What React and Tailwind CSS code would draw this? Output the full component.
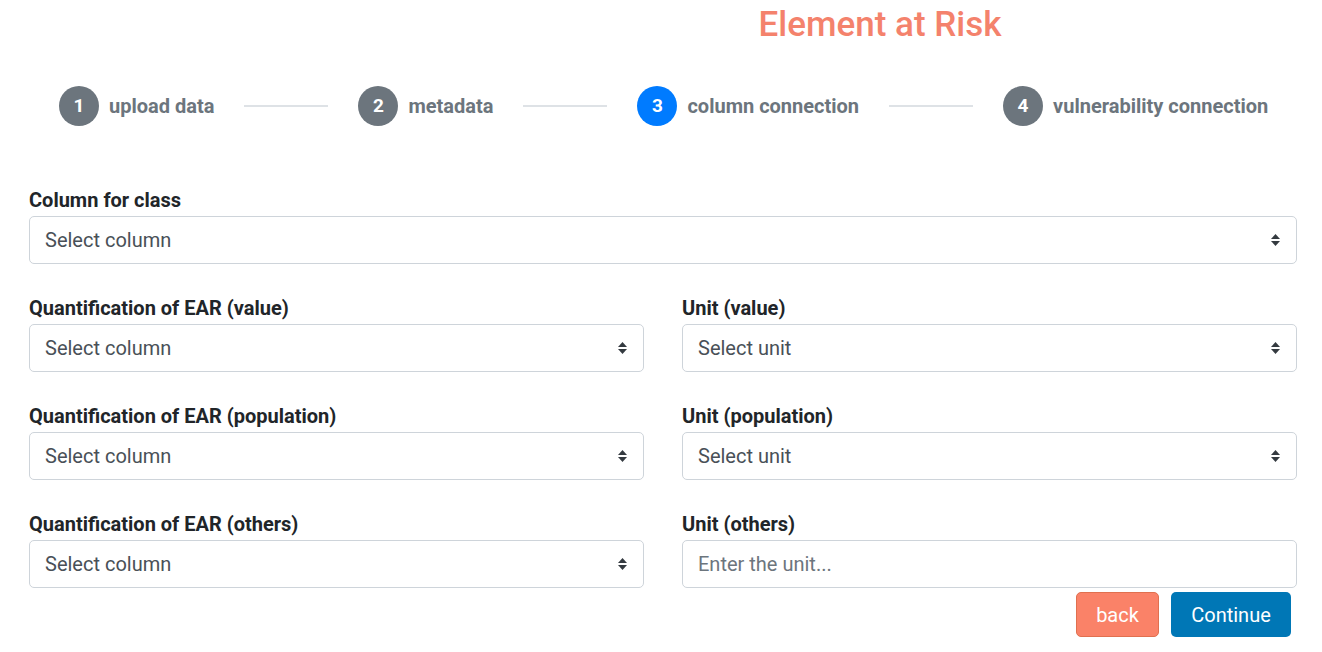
import React from "react"

const steps = [
  { n: 1, label: "upload data" },
  { n: 2, label: "metadata" },
  { n: 3, label: "column connection", active: true },
  { n: 4, label: "vulnerability connection" },
]

const Arrows = () => (
  <svg width="11" height="16" viewBox="0 0 11 16" className="shrink-0">
    <path d="M1 7 L5.5 2 L10 7 Z" fill="#343a40" />
    <path d="M1 9 L5.5 14 L10 9 Z" fill="#343a40" />
  </svg>
)

const SelectBox = ({ text }) => (
  <div className="flex h-[48px] items-center justify-between rounded-[5px] border border-[#ced4da] bg-white pl-[15px] pr-[15px] text-[20px] text-[#495057]">
    <span>{text}</span>
    <Arrows />
  </div>
)

const Field = ({ label, children, first }) => (
  <div className={first ? "" : "mt-[32px]"}>
    <div className="mb-[3px] h-[25px] text-[20px] font-bold leading-[25px] text-[#212529]">{label}</div>
    {children}
  </div>
)

export default function App() {
  return (
    <div className="min-h-screen bg-white" style={{ fontFamily: "Roboto, 'Liberation Sans', sans-serif" }}>
      <div className="flex justify-center pl-[438px] pt-[5px]">
        <h1 className="text-[35px] font-medium leading-[40px] text-[#f4826c]">Element at Risk</h1>
      </div>

      <div className="mt-[41px] flex items-center pl-[59px]">
        {steps.map((s, i) => (
          <div key={s.n} className="flex items-center">
            <div
              className={`flex h-[40px] w-[40px] items-center justify-center rounded-full text-[19px] font-bold text-white ${
                s.active ? "bg-[#007bff]" : "bg-[#6c757d]"
              }`}
            >
              {s.n}
            </div>
            <span className="ml-[10px] text-[20px] font-bold text-[#6c757d]">{s.label}</span>
            {i < steps.length - 1 && <div className="mx-[30px] h-[2px] w-[84px] bg-[#dee2e6]" />}
          </div>
        ))}
      </div>

      <div className="mx-[29px] mt-[62px] w-[1268px]">
        <Field label="Column for class" first>
          <SelectBox text="Select column" />
        </Field>

        <div className="grid grid-cols-2 gap-x-[38px]">
          <Field label="Quantification of EAR (value)">
            <SelectBox text="Select column" />
          </Field>
          <Field label="Unit (value)">
            <SelectBox text="Select unit" />
          </Field>
          <Field label="Quantification of EAR (population)">
            <SelectBox text="Select column" />
          </Field>
          <Field label="Unit (population)">
            <SelectBox text="Select unit" />
          </Field>
          <Field label="Quantification of EAR (others)">
            <SelectBox text="Select column" />
          </Field>
          <Field label="Unit (others)">
            <div className="flex h-[48px] items-center rounded-[5px] border border-[#ced4da] bg-white pl-[15px] text-[20px] text-[#6c757d]">
              Enter the unit...
            </div>
          </Field>
        </div>

        <div className="mt-[4px] flex justify-end gap-[12px] pr-[6px]">
          <button className="h-[45px] w-[83px] rounded-[5px] border border-[#e0704f] bg-[#fa8268] text-[20px] text-white">
            back
          </button>
          <button className="h-[45px] w-[120px] rounded-[5px] bg-[#0077b6] text-[20px] text-white">Continue</button>
        </div>
      </div>
    </div>
  )
}
